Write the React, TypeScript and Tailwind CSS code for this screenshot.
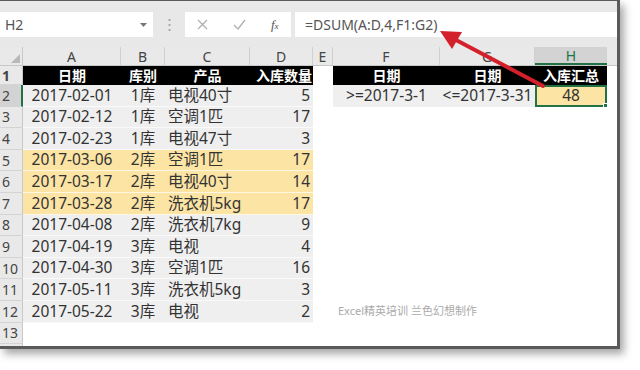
import React from 'react';

const W = { rh: 23, a: 98, b: 44, c: 85, d: 63, e: 20, f: 107, g: 95, h: 72 };

type Rec = [string, string, string, number, boolean];

const data: Rec[] = [
  ['2017-02-01', '1库', '电视40寸', 5, false],
  ['2017-02-12', '1库', '空调1匹', 17, false],
  ['2017-02-23', '1库', '电视47寸', 3, false],
  ['2017-03-06', '2库', '空调1匹', 17, true],
  ['2017-03-17', '2库', '电视40寸', 14, true],
  ['2017-03-28', '2库', '洗衣机5kg', 17, true],
  ['2017-04-08', '2库', '洗衣机7kg', 9, false],
  ['2017-04-19', '3库', '电视', 4, false],
  ['2017-04-30', '3库', '空调1匹', 16, false],
  ['2017-05-11', '3库', '洗衣机5kg', 3, false],
  ['2017-05-22', '3库', '电视', 2, false],
];

const font = { fontFamily: '"Noto Sans", "Noto Sans CJK SC", sans-serif' };

function RowHead({ n, active }: { n?: number; active?: boolean }) {
  return (
    <div
      className={`shrink-0 w-[23px] h-full pl-[2px] flex items-center text-[14px] text-[#444] border-b border-[#d4d4d4] ${
        active ? 'bg-[#d3d3d3] border-r-2 border-r-[#217346]' : 'bg-[#e9e9e9] border-r border-r-[#c8c8c8]'
      }`}
    >
      {n}
    </div>
  );
}

function App() {
  return (
    <div className="w-[640px] h-[370px] bg-white relative overflow-hidden" style={font}>
      <div className="w-[620px] h-[349px] border-t border-r-[3px] border-b-[3px] border-[#5a5a5a] shadow-[4px_5px_8px_rgba(0,0,0,0.35)] flex flex-col overflow-hidden">
        {/* toolbar */}
        <div className="h-[46px] shrink-0 bg-[#e8e8e8] flex items-center pt-[1px]">
          <div className="w-[153px] h-[25px] bg-white flex items-center justify-between pl-[5px] pr-[6px] text-[14px] text-[#555]">
            <span>H2</span>
            <svg width="7" height="4" viewBox="0 0 7 4"><path d="M0 0H7L3.5 4Z" fill="#777" /></svg>
          </div>
          <div className="w-[32px] flex justify-center">
            <svg width="3" height="12" viewBox="0 0 3 12">
              <rect x="0.5" y="0" width="2" height="2" fill="#aaa" />
              <rect x="0.5" y="5" width="2" height="2" fill="#aaa" />
              <rect x="0.5" y="10" width="2" height="2" fill="#aaa" />
            </svg>
          </div>
          <div className="w-[106px] h-[25px] bg-white flex items-center justify-around">
            <svg width="11" height="11" viewBox="0 0 11 11"><path d="M1 1L10 10M10 1L1 10" stroke="#b0b0b0" strokeWidth="1.3" /></svg>
            <svg width="13" height="11" viewBox="0 0 13 11"><path d="M1 6L5 10L12 1" stroke="#b0b0b0" strokeWidth="1.3" fill="none" /></svg>
            <span className="italic text-[13px] text-[#555]" style={{ fontFamily: '"Liberation Serif", serif' }}>
              f<span className="text-[9px]">x</span>
            </span>
          </div>
          <div className="ml-[4px] flex-1 h-[25px] bg-white flex items-center pl-[10px] text-[14px] text-[#555]">
            =DSUM(A:D,4,F1:G2)
          </div>
        </div>

        {/* column headers */}
        <div className="h-[19px] shrink-0 flex bg-[#e9e9e9] text-[14px] text-[#444] border-b border-[#c8c8c8]">
          <div className="shrink-0 w-[23px] border-r border-[#c8c8c8] flex items-end justify-end p-[2px]">
            <svg width="9" height="9" viewBox="0 0 9 9"><path d="M9 0V9H0Z" fill="#b8b8b8" /></svg>
          </div>
          {(['A', 'B', 'C', 'D', 'E', 'F', 'G'] as const).map((c) => (
            <div
              key={c}
              className="shrink-0 border-r border-[#d0d0d0] flex items-center justify-center"
              style={{ width: W[c.toLowerCase() as keyof typeof W] }}
            >
              {c}
            </div>
          ))}
          <div className="shrink-0 w-[72px] bg-[#d3d3d3] border-b-2 border-[#217346] flex items-center justify-center text-[#217346]">
            H
          </div>
          <div className="flex-1" />
        </div>

        {/* row 1 */}
        <div className="h-[19px] shrink-0 flex text-[14px] font-bold text-white">
          <RowHead n={1} />
          <div className="w-[98px] bg-black flex items-center justify-center">日期</div>
          <div className="w-[44px] bg-black flex items-center justify-center">库别</div>
          <div className="w-[85px] bg-black flex items-center justify-center">产品</div>
          <div className="w-[63px] bg-black flex items-center justify-end pr-[1px]">入库数量</div>
          <div className="w-[20px]" />
          <div className="w-[107px] bg-black flex items-center justify-center">日期</div>
          <div className="w-[95px] bg-black flex items-center justify-center">日期</div>
          <div className="w-[72px] bg-black flex items-center justify-center">入库汇总</div>
        </div>

        {data.map((r, i) => {
          const bg = r[4] ? 'bg-[#fbe4a4]' : 'bg-[#efefef]';
          return (
            <div key={i} className="h-[21.6px] shrink-0 flex text-[15.5px] text-[#333]">
              <RowHead n={i + 2} active={i === 0} />
              <div className={`w-[98px] ${bg} border-b border-white/70 flex items-center justify-center`}>{r[0]}</div>
              <div className={`w-[44px] ${bg} border-b border-white/70 flex items-center justify-center`}>{r[1]}</div>
              <div className={`w-[85px] ${bg} border-b border-white/70 flex items-center pl-[3px]`}>{r[2]}</div>
              <div className={`w-[63px] ${bg} border-b border-white/70 flex items-center justify-end pr-[3px]`}>{r[3]}</div>
              <div className="w-[20px]" />
              {i === 0 && (
                <>
                  <div className="w-[107px] bg-[#efefef] flex items-center justify-center">&gt;=2017-3-1</div>
                  <div className="w-[95px] bg-[#efefef] flex items-center justify-center">&lt;=2017-3-31</div>
                  <div className="w-[72px] bg-[#fbe4a4] border-2 border-[#217346] flex items-center justify-center relative">
                    48
                    <span className="absolute -right-[3px] -bottom-[3px] w-[5px] h-[5px] bg-[#217346] border border-white" />
                  </div>
                </>
              )}
              {i === 10 && (
                <div className="pl-[5px] flex items-center text-[11px] text-[#aaa]">Excel精英培训 兰色幻想制作</div>
              )}
            </div>
          );
        })}
        <div className="h-[21.6px] shrink-0 flex">
          <RowHead n={13} />
        </div>
        <div className="h-[21.6px] shrink-0 flex">
          <RowHead />
        </div>
      </div>

      {/* red arrow */}
      <svg className="absolute left-0 top-0 pointer-events-none" width="640" height="370">
        <line x1="543" y1="86" x2="456" y2="40" stroke="#d3202a" strokeWidth="4" strokeLinecap="round" />
        <polygon points="440,31 462,32 452,49" fill="#d3202a" />
      </svg>
    </div>
  );
}

export default App;
